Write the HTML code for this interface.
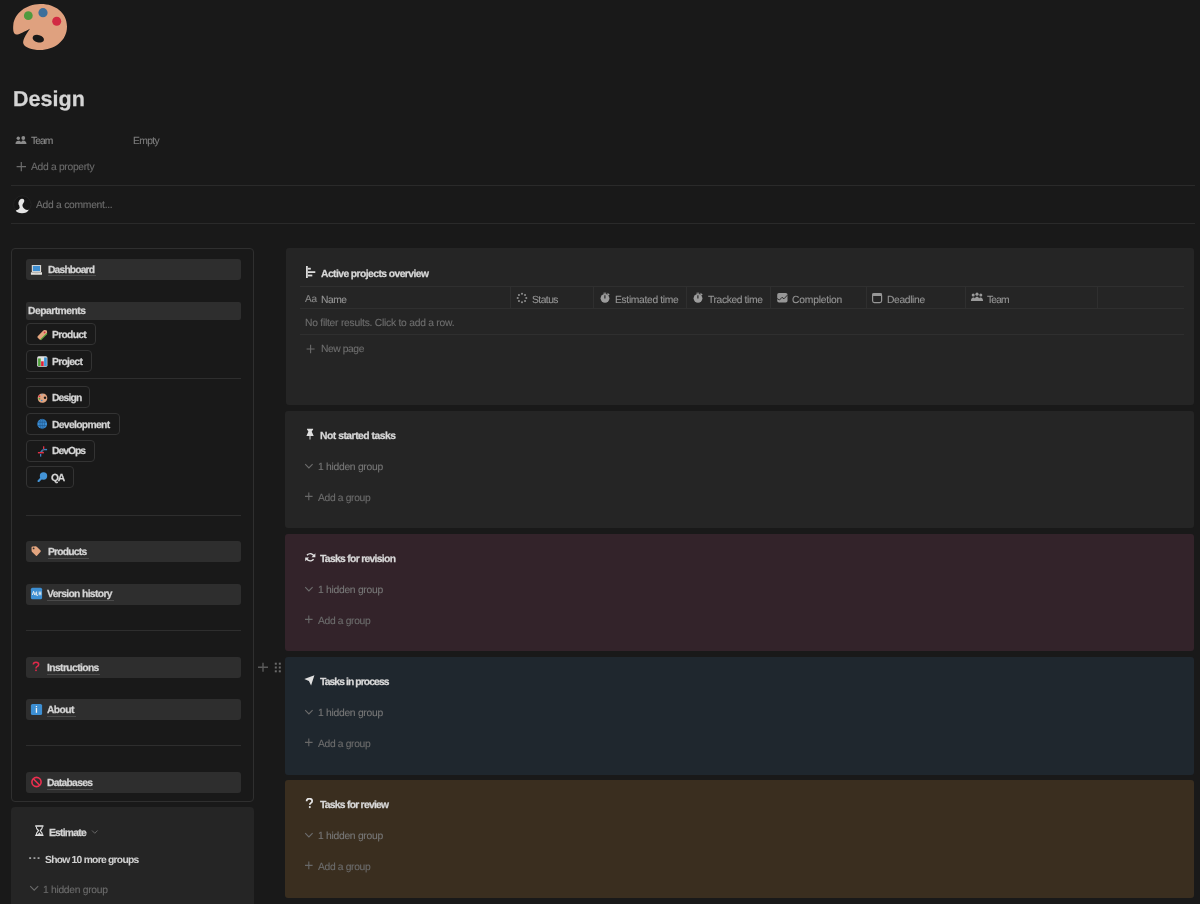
<!DOCTYPE html>
<html><head><meta charset="utf-8"><title>Design</title><style>
*{margin:0;padding:0;box-sizing:border-box}
html,body{width:1200px;height:904px;overflow:hidden;background:#191919}
body{position:relative;font-family:"Liberation Sans",sans-serif;color:#d4d4d4}
.a{position:absolute;display:block}
.t{position:absolute;white-space:nowrap;line-height:30px;font-size:10px;will-change:transform;-webkit-text-stroke-width:0.1px;text-rendering:geometricPrecision}
.b{font-weight:bold;-webkit-text-stroke-width:0.25px}
.hr{position:absolute;height:1px;background:#2a2a2a}
.btn{position:absolute;left:26px;width:215px;height:21px;background:#2e2e2e;border-radius:3px}
.pill{position:absolute;left:26px;height:22px;border:1px solid #333333;border-radius:4px}
.card{position:absolute;left:285px;width:909px;border-radius:4px;background:#252525}
.ul{position:absolute;height:1px;background:#4b4b4b}
</style></head><body>
<svg class="a" style="left:12px;top:3px" width="58" height="50" viewBox="0 0 58 50"><path d="M28 1C42 0.5 55 9 55 23.5C55 38 42 47 28 47C20 47 12.5 44.5 11.3 40.5C10.5 37 13.5 32 18 25.7C13 28 8 31.5 4.5 31.5C1.5 31.5 0.8 27 1.3 22C2.5 10 14 1.5 28 1Z" fill="#dfa17f"/>
<ellipse cx="26.3" cy="35.7" rx="5.8" ry="3.7" transform="rotate(15 26.3 35.7)" fill="#191919"/>
<circle cx="16.3" cy="12.7" r="4.4" fill="#4f9a3f"/><circle cx="31" cy="9.7" r="4.6" fill="#3d6f9b"/><circle cx="44.7" cy="18.3" r="4.5" fill="#d22b43"/></svg>
<div class="t b" style="left:12.80px;top:84.0px;font-size:21.5px;color:#d5d5d5;letter-spacing:0.040px;">Design</div>
<svg class="a" style="left:15px;top:136px" width="12" height="9" viewBox="0 0 12 9"><g fill="#8b8b8b"><circle cx="3.3" cy="2.2" r="1.7"/><circle cx="8.3" cy="2" r="1.9"/><path d="M0.5 8C0.5 5.8 1.8 4.8 3.3 4.8S5.5 5.3 6 6.2C6.6 5.2 7.3 4.6 8.3 4.6C10 4.6 11.5 5.8 11.5 8Z"/></g></svg>
<div class="t" style="left:31.00px;top:127.0px;font-size:10.3px;color:#8b8b8b;letter-spacing:-0.967px;">Team</div>
<div class="t" style="left:132.60px;top:127.0px;font-size:10.3px;color:#7c7c7c;letter-spacing:-0.625px;">Empty</div>
<svg class="a" style="left:16px;top:161px" width="11" height="11" viewBox="0 0 11 11"><path d="M5.3 1V10.3M0.6 5.6H10" stroke="#6b6b6b" stroke-width="1.2"/></svg>
<div class="t" style="left:31.00px;top:153.0px;font-size:10.3px;color:#6b6b6b;letter-spacing:-0.308px;">Add a property</div>
<div class="a" style="left:11px;top:185px;width:1184px;height:1px;background:#2a2a2a;"></div>
<svg class="a" style="left:13px;top:195px" width="19" height="19" viewBox="0 0 19 19"><circle cx="9.3" cy="9.5" r="8.7" fill="#151515" stroke="#2a2a2a" stroke-width="0.6"/><path d="M9 3.8C10.8 3.8 11.6 5 11.2 6.6C10.9 7.8 10 8.5 9.6 9.5C9.3 10.5 9.6 11.5 10.2 12.5C11 13.8 12.5 15.3 15.8 14.8C14.8 17.2 12 18.3 9 18.3C6 18.3 3.5 17.3 2.8 15.6C4.5 14.8 6.3 14.3 6.6 12.8C6.8 11.8 6 11 6.2 10.3C5.6 9.8 5.2 9.3 5.5 8.6C5.3 8 5.4 7 5.9 6.2C6.5 4.7 7.5 3.8 9 3.8Z" fill="#e4e4e4"/></svg>
<div class="t" style="left:36.00px;top:191.0px;font-size:10.3px;color:#6f6f6f;letter-spacing:-0.267px;">Add a comment...</div>
<div class="a" style="left:11px;top:223px;width:1184px;height:1px;background:#2a2a2a;"></div>
<div class="a" style="left:11px;top:248px;width:243px;height:554px;border:1px solid #2f2f2f;border-radius:4px"></div>
<div class="btn" style="top:259px"></div>
<div class="a" style="left:47.5px;top:275px;width:48px;height:1px;background:#4a4a4a;"></div>
<div class="t b" style="left:47.70px;top:256.0px;font-size:10.3px;color:#d4d4d4;letter-spacing:-0.838px;">Dashboard</div>
<svg class="a" style="left:30px;top:264px" width="13" height="12" viewBox="0 0 13 12"><rect x="1.8" y="1" width="9.3" height="7" rx="0.6" fill="#dcd9d4"/><rect x="2.9" y="1.9" width="7.1" height="5.2" fill="#3f8fd2"/><path d="M0.9 8.2H12V10.2Q12 10.8 11.4 10.8H1.5Q0.9 10.8 0.9 10.2Z" fill="#e4e2de"/><rect x="4.6" y="8.5" width="3.7" height="0.8" fill="#b8b6b2"/></svg>
<div class="a" style="left:26px;top:302px;width:215px;height:18px;background:#2e2e2e;border-radius:2px"></div>
<div class="t b" style="left:28.00px;top:297.0px;font-size:10.3px;color:#d4d4d4;letter-spacing:-0.500px;">Departments</div>
<div class="pill" style="top:323px;width:70px"></div>
<div class="t b" style="left:51.60px;top:320.9px;font-size:10.3px;color:#d4d4d4;letter-spacing:-0.683px;">Product</div>
<svg class="a" style="left:36px;top:329px" width="12" height="12" viewBox="0 0 12 12"><path d="M1.7 7.2L7.3 1.6Q7.9 1 8.8 1.1L10.2 1.3Q10.9 1.5 11 2.2L11.1 3.6Q11.2 4.4 10.6 5L5 10.6Q4.3 11.2 3.6 10.6L1.7 8.7Q1.1 8 1.7 7.2Z" fill="#e2a57e"/><path d="M4.6 10.9L11 4.5" stroke="#56a83a" stroke-width="1.1"/><circle cx="8.6" cy="3.4" r="0.9" fill="#d8314a"/></svg>
<div class="pill" style="top:349.5px;width:66px"></div>
<div class="t b" style="left:51.80px;top:348.1px;font-size:10.3px;color:#d4d4d4;letter-spacing:-0.683px;">Project</div>
<svg class="a" style="left:37px;top:356px" width="11" height="11" viewBox="0 0 11 11"><rect x="0.2" y="0.3" width="10.2" height="10.5" rx="1.5" fill="#e3e3e3"/><rect x="1.1" y="2.4" width="2.6" height="7.6" fill="#4fa23c"/><rect x="4.1" y="5.3" width="2.6" height="4.7" fill="#dd1f36"/><rect x="7.1" y="1.5" width="2.7" height="8.5" fill="#3e95da"/></svg>
<div class="a" style="left:26px;top:378px;width:215px;height:1px;background:#2e2e2e;"></div>
<div class="pill" style="top:386px;width:64px"></div>
<div class="t b" style="left:51.80px;top:384.4px;font-size:10.3px;color:#d4d4d4;letter-spacing:-0.820px;">Design</div>
<svg class="a" style="left:37px;top:393px" width="11" height="11" viewBox="0 0 11 11"><path d="M5.5 0.5C8.5 0.5 10.3 2.5 10.3 5C10.3 8 8 9.8 5.3 9.8C2.5 9.8 0.7 7.8 0.7 5C0.7 2.3 2.7 0.5 5.5 0.5Z" fill="#e2a47f"/><circle cx="8" cy="4.8" r="1.2" fill="#1d1d1d"/><rect x="1.7" y="2.5" width="1.5" height="1.7" fill="#d8283f"/><rect x="1.7" y="4.9" width="1.5" height="1.7" fill="#4e9a3a"/><rect x="3.9" y="6.8" width="1.6" height="1.3" fill="#3f86c8"/><rect x="4" y="1.2" width="1.6" height="1.1" fill="#9ab"/></svg>
<div class="pill" style="top:413px;width:94px"></div>
<div class="t b" style="left:51.80px;top:410.7px;font-size:10.3px;color:#d4d4d4;letter-spacing:-0.650px;">Development</div>
<svg class="a" style="left:37px;top:418px" width="11" height="12" viewBox="0 0 11 12"><circle cx="5.2" cy="5.9" r="4.9" fill="#3b8ed6"/><g stroke="#1d4f80" stroke-width="0.6" fill="none"><ellipse cx="5.2" cy="5.9" rx="2.2" ry="4.9"/><path d="M0.6 4.2H9.8M0.6 7.6H9.8M5.2 1V10.8"/></g></svg>
<div class="pill" style="top:439.5px;width:69px"></div>
<div class="t b" style="left:51.80px;top:437.3px;font-size:10.3px;color:#d4d4d4;letter-spacing:-0.980px;">DevOps</div>
<svg class="a" style="left:37px;top:445px" width="11" height="12" viewBox="0 0 11 12"><g fill="#3d83c4"><rect x="3" y="9" width="1.3" height="2.6"/><rect x="6.5" y="3.9" width="3.6" height="1.4"/></g><path d="M3.4 7.6L5.8 4.6" stroke="#3d83c4" stroke-width="1.3"/><g fill="#e03048"><rect x="6" y="1.3" width="1.3" height="2.9"/><rect x="0.9" y="7" width="6" height="1.4"/></g><path d="M6.6 4.5L5.4 7" stroke="#777" stroke-width="0.7"/></svg>
<div class="pill" style="top:466px;width:48px"></div>
<div class="t b" style="left:51.30px;top:463.7px;font-size:10.3px;color:#d4d4d4;letter-spacing:-1.300px;">QA</div>
<svg class="a" style="left:37px;top:469px" width="11" height="13" viewBox="0 0 11 13"><circle cx="6.5" cy="7" r="3.7" fill="#4393d6"/><path d="M3.8 9.8L1.6 12" stroke="#4393d6" stroke-width="2.2" stroke-linecap="round"/></svg>
<div class="a" style="left:26px;top:515px;width:215px;height:1px;background:#2e2e2e;"></div>
<div class="btn" style="top:541px"></div>
<div class="a" style="left:47.5px;top:558px;width:41px;height:1px;background:#4a4a4a;"></div>
<div class="t b" style="left:47.50px;top:538.1px;font-size:10.3px;color:#d4d4d4;letter-spacing:-0.786px;">Products</div>
<svg class="a" style="left:30px;top:545px" width="12" height="13" viewBox="0 0 12 13"><path d="M2.6 1.4L5.6 1.2Q6.3 1.2 6.8 1.7L10.6 5.5Q11.1 6.1 10.6 6.7L7.2 10.6Q6.6 11.2 6 10.7L2.1 6.9Q1.6 6.4 1.6 5.7L1.5 2.5Q1.6 1.5 2.6 1.4Z" fill="#e3a57f"/><circle cx="3.6" cy="3.4" r="0.9" fill="#2e2e2e"/></svg>
<div class="btn" style="top:584px"></div>
<div class="a" style="left:46.5px;top:600px;width:67px;height:1px;background:#4a4a4a;"></div>
<div class="t b" style="left:47.30px;top:580.0px;font-size:10.3px;color:#d4d4d4;letter-spacing:-0.636px;">Version history</div>
<svg class="a" style="left:30px;top:587px" width="13" height="13" viewBox="0 0 13 13"><rect x="0.9" y="0.7" width="11.2" height="11.6" rx="1.6" fill="#3d8fd3"/><path d="M2.3 8L3.6 4.3L4.6 8M5.2 5.4V8.2M6.6 4.5V8.3H8M9.2 4.5V8.3M9.2 6.3H10.8M10.8 4.5V8.3" stroke="#f2f2f2" stroke-width="0.9" fill="none"/></svg>
<div class="a" style="left:26px;top:630px;width:215px;height:1px;background:#2e2e2e;"></div>
<div class="btn" style="top:656.5px"></div>
<div class="a" style="left:46.5px;top:673.5px;width:53px;height:1px;background:#4a4a4a;"></div>
<div class="t b" style="left:47.40px;top:653.5px;font-size:10.3px;color:#d4d4d4;letter-spacing:-0.600px;">Instructions</div>
<svg class="a" style="left:31px;top:661px" width="10" height="11" viewBox="0 0 10 11"><path d="M2.3 3.6Q2.3 1.2 5 1.2Q7.7 1.2 7.7 3.5Q7.7 4.9 6 5.6Q5 6.1 5 7.6" stroke="#e0294a" stroke-width="1.5" fill="none"/><rect x="4.2" y="8.6" width="1.6" height="1.5" fill="#e0294a"/></svg>
<div class="btn" style="top:699px"></div>
<div class="a" style="left:46.5px;top:716px;width:29px;height:1px;background:#4a4a4a;"></div>
<div class="t b" style="left:47.40px;top:696.0px;font-size:10.3px;color:#d4d4d4;letter-spacing:-0.600px;">About</div>
<svg class="a" style="left:30px;top:703px" width="13" height="13" viewBox="0 0 13 13"><rect x="0.9" y="0.9" width="11.2" height="11.1" rx="1.6" fill="#3d8fd3"/><rect x="5.8" y="3" width="1.3" height="1.2" fill="#f2f2f2"/><rect x="5.8" y="5" width="1.3" height="4.8" fill="#f2f2f2"/></svg>
<div class="a" style="left:26px;top:745px;width:215px;height:1px;background:#2e2e2e;"></div>
<div class="btn" style="top:771.5px"></div>
<div class="a" style="left:46.5px;top:788.5px;width:46px;height:1px;background:#4a4a4a;"></div>
<div class="t b" style="left:47.40px;top:768.5px;font-size:10.3px;color:#d4d4d4;letter-spacing:-0.700px;">Databases</div>
<svg class="a" style="left:30px;top:776px" width="13" height="12" viewBox="0 0 13 12"><circle cx="6.5" cy="6" r="4.6" stroke="#ee2f50" stroke-width="1.6" fill="none"/><path d="M3.3 2.8L9.7 9.2" stroke="#ee2f50" stroke-width="1.6"/></svg>
<div class="a" style="left:11px;top:807px;width:243px;height:120px;background:#252525;border-radius:4px"></div>
<svg class="a" style="left:34px;top:825px" width="11" height="12" viewBox="0 0 11 12"><path d="M1.2 1H9.5M1.2 10.4H9.5" stroke="#e2e2e2" stroke-width="1.3"/><path d="M2.3 1.5C2.3 4.5 4.5 5 4.5 5.7S2.3 7 2.3 10H8.4C8.4 7 6.2 6.4 6.2 5.7S8.4 4.5 8.4 1.5" stroke="#e2e2e2" stroke-width="1.1" fill="none"/><path d="M3.5 9.8L5.35 7.6L7.2 9.8Z" fill="#e2e2e2"/></svg>
<div class="t b" style="left:49.30px;top:818.6px;font-size:10.3px;color:#d4d4d4;letter-spacing:-0.757px;">Estimate</div>
<svg class="a" style="left:91px;top:829px" width="8" height="6" viewBox="0 0 8 6"><path d="M1 1.5L3.8 4.3L6.6 1.5" stroke="#6f6f6f" stroke-width="0.9" fill="none"/></svg>
<svg class="a" style="left:28px;top:857px" width="13" height="3" viewBox="0 0 13 3"><g fill="#a2a2a2"><rect x="1.2" y="0.2" width="1.9" height="1.8"/><rect x="5.5" y="0.2" width="1.9" height="1.8"/><rect x="9.6" y="0.2" width="1.9" height="1.8"/></g></svg>
<div class="t b" style="left:44.50px;top:845.9px;font-size:10.3px;color:#d0d0d0;letter-spacing:-0.742px;-webkit-text-stroke-width:0.05px">Show 10 more groups</div>
<svg class="a" style="left:29px;top:885px" width="11" height="7" viewBox="0 0 11 7"><path d="M1.2 1.2L5.2 5.2L9.2 1.2" stroke="#6a6a6a" stroke-width="1.1" fill="none"/></svg>
<div class="t" style="left:43.40px;top:876.0px;font-size:10.3px;color:#6c6c6c;letter-spacing:-0.292px;">1 hidden group</div>
<svg class="a" style="left:257px;top:662px" width="28" height="11" viewBox="0 0 28 11"><path d="M6 0.7V9.7M1 5.2H11" stroke="#5a5a5a" stroke-width="1.4"/><g fill="#6a6a6a"><rect x="17.8" y="0.7" width="2" height="2"/><rect x="21.8" y="0.7" width="2" height="2"/><rect x="17.8" y="4.5" width="2" height="2"/><rect x="21.8" y="4.5" width="2" height="2"/><rect x="17.8" y="8.3" width="2" height="2"/><rect x="21.8" y="8.3" width="2" height="2"/></g></svg>
<div class="a" style="left:286px;top:248px;width:908px;height:157px;background:#252525;border-radius:3px"></div>
<svg class="a" style="left:305px;top:265px" width="12" height="14" viewBox="0 0 12 14"><g fill="#dadada"><rect x="1" y="1" width="1.8" height="12"/><rect x="2.8" y="2.8" width="3" height="1.8"/><rect x="2.8" y="6.2" width="7.5" height="1.8"/><rect x="2.8" y="9.6" width="4.5" height="1.8"/></g></svg>
<div class="t b" style="left:320.80px;top:259.7px;font-size:10.3px;color:#d8d8d8;letter-spacing:-0.557px;">Active projects overview</div>
<div class="a" style="left:300px;top:286px;width:884px;height:1px;background:#2f2f2f;"></div>
<div class="a" style="left:300px;top:308px;width:884px;height:1px;background:#2f2f2f;"></div>
<div class="a" style="left:300px;top:334px;width:884px;height:1px;background:#2f2f2f;"></div>
<div class="a" style="left:510px;top:287px;width:1px;height:21px;background:#2f2f2f;"></div>
<div class="a" style="left:593px;top:287px;width:1px;height:21px;background:#2f2f2f;"></div>
<div class="a" style="left:686px;top:287px;width:1px;height:21px;background:#2f2f2f;"></div>
<div class="a" style="left:770px;top:287px;width:1px;height:21px;background:#2f2f2f;"></div>
<div class="a" style="left:866px;top:287px;width:1px;height:21px;background:#2f2f2f;"></div>
<div class="a" style="left:965px;top:287px;width:1px;height:21px;background:#2f2f2f;"></div>
<div class="a" style="left:1097px;top:287px;width:1px;height:21px;background:#2f2f2f;"></div>
<div class="t" style="left:305px;top:284.5px;font-size:10px;color:#8a8a8a;letter-spacing:-0.2px">Aa</div>
<div class="t" style="left:320.80px;top:285.5px;font-size:10.3px;color:#959595;letter-spacing:-0.500px;">Name</div>
<svg class="a" style="left:515px;top:291px" width="14" height="14" viewBox="0 0 14 14"><circle cx="11.30" cy="7.00" r="1.05" fill="#8c8c8c"/><circle cx="10.04" cy="10.04" r="1.05" fill="#8c8c8c"/><circle cx="7.00" cy="11.30" r="1.05" fill="#8c8c8c"/><circle cx="3.96" cy="10.04" r="1.05" fill="#8c8c8c"/><circle cx="2.70" cy="7.00" r="1.05" fill="#8c8c8c"/><circle cx="3.96" cy="3.96" r="1.05" fill="#8c8c8c"/><circle cx="7.00" cy="2.70" r="1.05" fill="#8c8c8c"/><circle cx="10.04" cy="3.96" r="1.05" fill="#8c8c8c"/></svg>
<div class="t" style="left:532.00px;top:285.5px;font-size:10.3px;color:#959595;letter-spacing:-0.540px;">Status</div>
<svg class="a" style="left:600px;top:292px" width="11" height="12" viewBox="0 0 11 12"><circle cx="5" cy="6.3" r="4.4" fill="#9c9c9c"/><path d="M4.9 3.2V6.6" stroke="#252525" stroke-width="1.2"/><path d="M7.7 0.8L9.9 2.9L7.2 3.3Z" fill="#9c9c9c"/><path d="M3.5 1.2H6.2" stroke="#9c9c9c" stroke-width="1"/></svg>
<div class="t" style="left:614.80px;top:285.5px;font-size:10.3px;color:#959595;letter-spacing:-0.331px;">Estimated time</div>
<svg class="a" style="left:693px;top:292px" width="11" height="12" viewBox="0 0 11 12"><circle cx="5" cy="6.3" r="4.4" fill="#9c9c9c"/><path d="M4.9 3.2V6.6" stroke="#252525" stroke-width="1.2"/><path d="M7.7 0.8L9.9 2.9L7.2 3.3Z" fill="#9c9c9c"/><path d="M3.5 1.2H6.2" stroke="#9c9c9c" stroke-width="1"/></svg>
<div class="t" style="left:707.70px;top:285.5px;font-size:10.3px;color:#959595;letter-spacing:-0.382px;">Tracked time</div>
<svg class="a" style="left:776px;top:292px" width="12" height="12" viewBox="0 0 12 12"><rect x="1.2" y="1" width="10.3" height="9.5" rx="1.8" fill="#979797"/><path d="M1 6.5L3.5 8L6 5.3L8 6.8L11.5 3" stroke="#252525" stroke-width="0.9" fill="none"/></svg>
<div class="t" style="left:792.30px;top:285.5px;font-size:10.3px;color:#959595;letter-spacing:-0.200px;">Completion</div>
<svg class="a" style="left:871px;top:292px" width="12" height="12" viewBox="0 0 12 12"><rect x="1.6" y="1.6" width="9" height="9" rx="1.8" stroke="#969696" stroke-width="1.2" fill="none"/><rect x="1.2" y="1.2" width="9.8" height="2.8" rx="1" fill="#969696"/></svg>
<div class="t" style="left:886.50px;top:285.5px;font-size:10.3px;color:#959595;letter-spacing:-0.357px;">Deadline</div>
<svg class="a" style="left:970px;top:292px" width="15" height="10" viewBox="0 0 15 10"><g fill="#9a9a9a"><circle cx="3.2" cy="3" r="1.5"/><circle cx="7" cy="2.2" r="1.6"/><circle cx="10.8" cy="3" r="1.5"/><path d="M0.9 9C1 7 2 5.6 3.3 5.6C4.2 5.6 4.6 6 4.9 6.4C5.3 5.3 6 4.7 7 4.7S8.7 5.3 9.1 6.4C9.4 6 9.8 5.6 10.7 5.6C12 5.6 13 7 13.1 9Z"/></g></svg>
<div class="t" style="left:986.60px;top:285.5px;font-size:10.3px;color:#959595;letter-spacing:-0.867px;">Team</div>
<div class="t" style="left:305.20px;top:308.8px;font-size:10.3px;color:#6e6e6e;letter-spacing:-0.243px;">No filter results. Click to add a row.</div>
<svg class="a" style="left:306px;top:344px" width="10" height="10" viewBox="0 0 10 10"><path d="M4.6 0.8V9.2M0.6 5H8.6" stroke="#6a6a6a" stroke-width="1.1"/></svg>
<div class="t" style="left:320.90px;top:334.7px;font-size:10.3px;color:#6e6e6e;letter-spacing:-0.429px;">New page</div>
<div class="a" style="left:285px;top:411px;width:909px;height:117px;background:#252525;border-radius:3px"></div>
<svg class="a" style="left:306px;top:428px" width="8" height="12" viewBox="0 0 8 12"><path d="M1 0.7H7.1V1.6L5.7 3.6L7.7 8H4.5V11.6H3.5V8H0.4L2.4 3.6L1 1.6Z" fill="#dedede"/></svg>
<div class="t b" style="left:320.40px;top:421.5px;font-size:10.3px;color:#d8d8d8;letter-spacing:-0.469px;">Not started tasks</div>
<svg class="a" style="left:304px;top:462.5px" width="10" height="7" viewBox="0 0 10 7"><path d="M1.2 1.2L4.9 4.9L8.6 1.2" stroke="#6c6c6c" stroke-width="1.1" fill="none"/></svg>
<div class="t" style="left:318.00px;top:453.0px;font-size:10.3px;color:#777777;letter-spacing:-0.277px;">1 hidden group</div>
<svg class="a" style="left:304px;top:492px" width="10" height="10" viewBox="0 0 10 10"><path d="M4.8 0.6V8.2M1 4.4H8.6" stroke="#686868" stroke-width="1.1"/></svg>
<div class="t" style="left:317.50px;top:484.0px;font-size:10.3px;color:#6c6c6c;letter-spacing:-0.340px;">Add a group</div>
<div class="a" style="left:285px;top:534px;width:909px;height:117px;background:#33232a;border-radius:3px"></div>
<svg class="a" style="left:304.5px;top:551.6px" width="11" height="10" viewBox="0 0 11 10"><path d="M2 3.3C3.2 1.8 5.8 1.3 7.6 2.5L8.9 3.6" stroke="#e0e0e0" stroke-width="1.4" fill="none"/><path d="M10.4 1.3V5.2H6.5Z" fill="#e0e0e0"/><path d="M8.6 7.3C7.4 8.8 4.8 9.3 3 8.1L1.7 7" stroke="#e0e0e0" stroke-width="1.4" fill="none"/><path d="M0.2 9.3V5.4H4.1Z" fill="#e0e0e0"/></svg>
<div class="t b" style="left:320.40px;top:544.5px;font-size:10.3px;color:#d8d8d8;letter-spacing:-0.671px;">Tasks for revision</div>
<svg class="a" style="left:304px;top:585.5px" width="10" height="7" viewBox="0 0 10 7"><path d="M1.2 1.2L4.9 4.9L8.6 1.2" stroke="#6c6c6c" stroke-width="1.1" fill="none"/></svg>
<div class="t" style="left:318.00px;top:576.0px;font-size:10.3px;color:#777777;letter-spacing:-0.277px;">1 hidden group</div>
<svg class="a" style="left:304px;top:615px" width="10" height="10" viewBox="0 0 10 10"><path d="M4.8 0.6V8.2M1 4.4H8.6" stroke="#686868" stroke-width="1.1"/></svg>
<div class="t" style="left:317.50px;top:607.0px;font-size:10.3px;color:#6c6c6c;letter-spacing:-0.340px;">Add a group</div>
<div class="a" style="left:285px;top:657px;width:909px;height:118px;background:#1f272e;border-radius:3px"></div>
<svg class="a" style="left:303.8px;top:675px" width="11" height="11" viewBox="0 0 11 11"><path d="M0.3 4L10.4 0.3L7.1 10.4L4.9 6Z" fill="#e0e0e0"/></svg>
<div class="t b" style="left:320.40px;top:667.5px;font-size:10.3px;color:#d8d8d8;letter-spacing:-0.887px;">Tasks in process</div>
<svg class="a" style="left:304px;top:708.5px" width="10" height="7" viewBox="0 0 10 7"><path d="M1.2 1.2L4.9 4.9L8.6 1.2" stroke="#6c6c6c" stroke-width="1.1" fill="none"/></svg>
<div class="t" style="left:318.00px;top:699.0px;font-size:10.3px;color:#777777;letter-spacing:-0.277px;">1 hidden group</div>
<svg class="a" style="left:304px;top:738px" width="10" height="10" viewBox="0 0 10 10"><path d="M4.8 0.6V8.2M1 4.4H8.6" stroke="#686868" stroke-width="1.1"/></svg>
<div class="t" style="left:317.50px;top:730.0px;font-size:10.3px;color:#6c6c6c;letter-spacing:-0.340px;">Add a group</div>
<div class="a" style="left:285px;top:780px;width:909px;height:118px;background:#3a2e1f;border-radius:3px"></div>
<svg class="a" style="left:305.3px;top:798.4px" width="9" height="11" viewBox="0 0 9 11"><path d="M1.6 3.3Q1.6 0.6 4.3 0.6Q7.2 0.6 7.2 3Q7.2 4.4 5.6 5.2Q4.8 5.6 4.8 6.7" stroke="#e6e6e6" stroke-width="1.7" fill="none"/><circle cx="4.8" cy="9.1" r="1.05" fill="#e6e6e6"/></svg>
<div class="t b" style="left:320.40px;top:790.5px;font-size:10.3px;color:#d8d8d8;letter-spacing:-0.727px;">Tasks for review</div>
<svg class="a" style="left:304px;top:831.5px" width="10" height="7" viewBox="0 0 10 7"><path d="M1.2 1.2L4.9 4.9L8.6 1.2" stroke="#6c6c6c" stroke-width="1.1" fill="none"/></svg>
<div class="t" style="left:318.00px;top:822.0px;font-size:10.3px;color:#777777;letter-spacing:-0.277px;">1 hidden group</div>
<svg class="a" style="left:304px;top:861px" width="10" height="10" viewBox="0 0 10 10"><path d="M4.8 0.6V8.2M1 4.4H8.6" stroke="#686868" stroke-width="1.1"/></svg>
<div class="t" style="left:317.50px;top:853.0px;font-size:10.3px;color:#6c6c6c;letter-spacing:-0.340px;">Add a group</div>
</body></html>
